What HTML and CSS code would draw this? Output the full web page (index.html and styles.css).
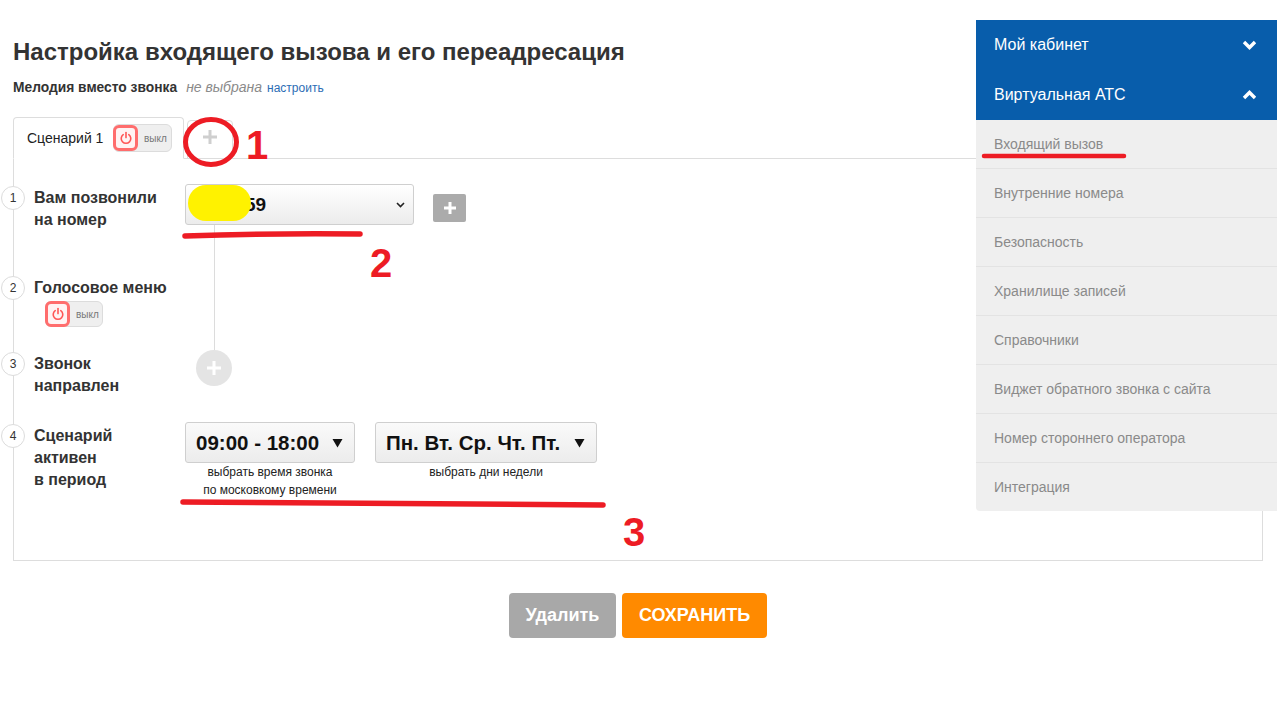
FILE: index.html
```html
<!DOCTYPE html>
<html lang="ru">
<head>
<meta charset="utf-8">
<title>Настройка входящего вызова</title>
<link rel="stylesheet" href="styles.css">
</head>
<body>
<div class="main">
  <h1 class="title">Настройка входящего вызова и его переадресация</h1>
  <div class="melody"><b>Мелодия вместо звонка</b><i>не выбрана</i><a class="link">настроить</a></div>

  <div class="tabs">
    <div class="tab tab-active">
      <span class="tab-name">Сценарий 1</span>
      <div class="toggle">
        <span class="power"><svg width="14" height="14" viewBox="0 0 14 14"><path d="M4.2 3.6 A4.8 4.8 0 1 0 9.8 3.6" fill="none" stroke="#ff5656" stroke-width="1.6" stroke-linecap="round"/><path d="M7 1.6 V6.6" stroke="#ff5656" stroke-width="1.6" stroke-linecap="round"/></svg></span>
        <span class="toggle-text">выкл</span>
      </div>
    </div>
    <div class="tab tab-add"><svg width="14" height="14" viewBox="0 0 14 14"><rect x="5.5" y="0" width="3" height="14" fill="#cfcfcf"/><rect x="0" y="5.5" width="14" height="3" fill="#cfcfcf"/></svg></div>
  </div>

  <div class="panel">
    <div class="row row-1">
      <div class="num">1</div>
      <div class="label">Вам позвонили<br>на номер</div>
      <div class="ctrl">
        <div class="ctrl-top">
          <div class="select select-num"><span class="sel-text">59</span><svg class="caret" width="9" height="6" viewBox="0 0 9 6"><path d="M1 1 L4.5 4.5 L8 1" fill="none" stroke="#222" stroke-width="1.6"/></svg></div>
          <div class="btn-plus"><svg width="12" height="12" viewBox="0 0 12 12"><rect x="4.5" y="0" width="3" height="12" fill="#fff"/><rect x="0" y="4.5" width="12" height="3" fill="#fff"/></svg></div>
        </div>
        <div class="connector"></div>
      </div>
    </div>

    <div class="row row-2">
      <div class="num">2</div>
      <div class="label-wrap">
        <div class="label">Голосовое меню</div>
        <div class="toggle toggle-row">
          <span class="power"><svg width="14" height="14" viewBox="0 0 14 14"><path d="M4.2 3.6 A4.8 4.8 0 1 0 9.8 3.6" fill="none" stroke="#ff5656" stroke-width="1.6" stroke-linecap="round"/><path d="M7 1.6 V6.6" stroke="#ff5656" stroke-width="1.6" stroke-linecap="round"/></svg></span>
          <span class="toggle-text">выкл</span>
        </div>
      </div>
      <div class="ctrl"><div class="connector"></div></div>
    </div>

    <div class="row row-3">
      <div class="num">3</div>
      <div class="label">Звонок<br>направлен</div>
      <div class="ctrl">
        <div class="circle-plus"><svg width="14" height="14" viewBox="0 0 14 14"><rect x="5.5" y="0" width="3" height="14" fill="#fff"/><rect x="0" y="5.5" width="14" height="3" fill="#fff"/></svg></div>
      </div>
    </div>

    <div class="row row-4">
      <div class="num">4</div>
      <div class="label">Сценарий<br>активен<br>в период</div>
      <div class="ctrl ctrl-period">
        <div class="pick">
          <div class="select select-big select-time"><span>09:00 - 18:00</span><svg width="11" height="10" viewBox="0 0 11 10"><path d="M0.5 1 H10.5 L5.5 9.5 Z" fill="#111"/></svg></div>
          <div class="caption">выбрать время звонка<br>по московкому времени</div>
        </div>
        <div class="pick">
          <div class="select select-big select-days"><span>Пн. Вт. Ср. Чт. Пт.</span><svg width="11" height="10" viewBox="0 0 11 10"><path d="M0.5 1 H10.5 L5.5 9.5 Z" fill="#111"/></svg></div>
          <div class="caption">выбрать дни недели</div>
        </div>
      </div>
    </div>
  </div>

  <div class="actions">
    <button class="btn btn-delete">Удалить</button>
    <button class="btn btn-save">СОХРАНИТЬ</button>
  </div>
</div>

<aside class="sidebar">
  <div class="side-head"><span>Мой кабинет</span><svg width="15" height="10" viewBox="0 0 15 10"><path d="M2 2 L7.5 7.5 L13 2" fill="none" stroke="#fff" stroke-width="3.4"/></svg></div>
  <div class="side-head"><span>Виртуальная АТС</span><svg width="15" height="10" viewBox="0 0 15 10"><path d="M2 8 L7.5 2.5 L13 8" fill="none" stroke="#fff" stroke-width="3.4"/></svg></div>
  <div class="side-item">Входящий вызов</div>
  <div class="side-item">Внутренние номера</div>
  <div class="side-item">Безопасность</div>
  <div class="side-item">Хранилище записей</div>
  <div class="side-item">Справочники</div>
  <div class="side-item">Виджет обратного звонка с сайта</div>
  <div class="side-item">Номер стороннего оператора</div>
  <div class="side-item">Интеграция</div>
</aside>

<svg class="marks" width="1277" height="717" viewBox="0 0 1277 717">
  <rect x="188" y="185" width="63" height="36" rx="18" ry="18" fill="#fff200"/>
  <ellipse cx="211" cy="142" rx="25.5" ry="22.5" fill="none" stroke="#ed1c24" stroke-width="5"/>
  <text x="246" y="159" class="mark-digit">1</text>
  <path d="M185 236 Q 270 233 360 234" fill="none" stroke="#ed1c24" stroke-width="5.5" stroke-linecap="round"/>
  <text x="370" y="277" class="mark-digit">2</text>
  <path d="M183 502 Q 400 503 603 505" fill="none" stroke="#ed1c24" stroke-width="5.5" stroke-linecap="round"/>
  <text x="623" y="546" class="mark-digit">3</text>
  <path d="M984 156 L1124 156" fill="none" stroke="#ed1c24" stroke-width="4.5" stroke-linecap="round"/>
</svg>
</body>
</html>
```
FILE: styles.css
```css
html, body {
  margin: 0;
  padding: 0;
  background: #fff;
}
body {
  font-family: "Liberation Sans", Arial, sans-serif;
  color: #333;
  position: relative;
  min-height: 717px;
}
.main {
  margin: 0 14px 0 13px;
  padding-top: 38px;
}
.title {
  margin: 0;
  font-size: 24px;
  line-height: 28px;
  font-weight: bold;
  color: #333;
}
.melody {
  margin-top: 13px;
  height: 16px;
  font-size: 14px;
  line-height: 16px;
  display: flex;
  align-items: baseline;
}
.melody b {
  color: #333;
  font-size: 13.8px;
}
.melody i {
  color: #8a8a8a;
  margin-left: 9px;
}
.melody .link {
  color: #2c6db5;
  font-size: 12px;
  margin-left: 5px;
}
.tabs {
  margin-top: 22px;
  display: flex;
  align-items: flex-end;
  border-bottom: 1px solid #ddd;
  height: 41px;
}
.tab {
  box-sizing: border-box;
  border: 1px solid #ddd;
  border-radius: 4px 4px 0 0;
  background: #fff;
}
.tab-active {
  height: 42px;
  width: 171px;
  margin-bottom: -1px;
  border-bottom-color: #fff;
  display: flex;
  align-items: center;
  padding: 0 11px 0 13px;
  justify-content: space-between;
}
.tab-name {
  font-size: 14px;
  color: #222;
}
.tab-add {
  width: 46px;
  height: 39px;
  margin-left: 3px;
  margin-bottom: -1px;
  border-bottom-color: #ddd;
  display: flex;
  align-items: center;
  justify-content: center;
  padding-bottom: 6px;
}
.toggle {
  box-sizing: border-box;
  width: 59px;
  height: 28px;
  background: #efefef;
  border: 1px solid #dcdcdc;
  border-radius: 6px;
  display: flex;
  align-items: center;
}
.power {
  box-sizing: border-box;
  width: 25px;
  height: 26px;
  border: 3px solid #ff6d6d;
  border-radius: 6px;
  background: #fff3f3;
  display: flex;
  align-items: center;
  justify-content: center;
  margin-left: -1px;
}
.toggle-text {
  font-size: 10px;
  color: #777;
  margin-left: 6px;
}
.panel {
  box-sizing: border-box;
  min-height: 402px;
  border: 1px solid #ddd;
  border-top: none;
  padding-top: 25px;
}
.row {
  display: flex;
}
.row-1 { height: 90px; }
.row-2 { height: 76px; }
.row-3 { height: 72px; }
.num {
  box-sizing: border-box;
  flex-shrink: 0;
  width: 24px;
  height: 24px;
  margin-left: -13px;
  margin-top: 2px;
  border: 1px solid #dcdcdc;
  border-radius: 50%;
  background: #fff;
  font-size: 12px;
  color: #333;
  display: flex;
  align-items: center;
  justify-content: center;
}
.label {
  width: 151px;
  margin-left: 9px;
  margin-top: 3px;
  font-size: 16px;
  line-height: 22px;
  font-weight: bold;
  color: #333;
  flex-shrink: 0;
}
.label-wrap {
  width: 160px;
  flex-shrink: 0;
}
.label-wrap .label {
  margin-top: 3px;
}
.toggle-row {
  width: 58px;
  height: 26px;
  margin-left: 20px;
  margin-top: 2px;
}
.toggle-row .power {
  height: 26px;
}
.ctrl {
  flex: 1;
  display: flex;
  flex-direction: column;
}
.ctrl-top {
  display: flex;
  align-items: flex-start;
}
.connector {
  flex: 1;
  margin-left: 29px;
  border-left: 1px solid #dcdcdc;
}
.select {
  box-sizing: border-box;
  border: 1px solid #cfcfcf;
  border-radius: 3px;
  background: linear-gradient(#ffffff, #ececec);
  display: flex;
  align-items: center;
  color: #111;
}
.select-num {
  width: 229px;
  height: 41px;
  padding: 0 8px 0 59px;
  justify-content: space-between;
  font-size: 19px;
  font-weight: bold;
}
.btn-plus {
  width: 33px;
  height: 28px;
  margin-left: 19px;
  margin-top: 10px;
  background: #ababab;
  border-radius: 2px;
  display: flex;
  align-items: center;
  justify-content: center;
}
.circle-plus {
  width: 36px;
  height: 36px;
  margin-left: 11px;
  border-radius: 50%;
  background: #e4e4e4;
  display: flex;
  align-items: center;
  justify-content: center;
}
.ctrl-period {
  flex-direction: row;
  gap: 20px;
}
.pick {
  display: flex;
  flex-direction: column;
  align-items: center;
}
.select-big {
  height: 41px;
  padding: 0 11px 0 10px;
  justify-content: space-between;
  font-size: 20.5px;
  font-weight: bold;
  background: linear-gradient(#fafafa, #ececec);
}
.select-time { width: 170px; }
.select-days { width: 222px; }
.caption {
  font-size: 12px;
  line-height: 18px;
  color: #222;
  text-align: center;
}
.actions {
  margin-top: 32px;
  display: flex;
  justify-content: center;
  gap: 6px;
}
.btn {
  height: 45px;
  border: none;
  border-radius: 4px;
  padding: 0;
  font-family: "Liberation Sans", Arial, sans-serif;
  font-size: 18px;
  font-weight: bold;
  color: #fff;
}
.btn-delete {
  background: #a8a8a8;
  width: 107px;
}
.btn-save {
  background: #ff8a00;
  width: 145px;
}
.sidebar {
  position: absolute;
  top: 20px;
  right: 0;
  width: 301px;
  border-radius: 0 0 0 4px;
  overflow: hidden;
  background: #efefef;
}
.side-head {
  box-sizing: border-box;
  height: 50px;
  background: #085dab;
  color: #fff;
  font-size: 16px;
  display: flex;
  align-items: center;
  justify-content: space-between;
  padding: 0 20px 0 18px;
}
.side-item {
  box-sizing: border-box;
  height: 49px;
  border-top: 1px solid #e3e3e3;
  padding-left: 18px;
  display: flex;
  align-items: center;
  font-size: 14px;
  color: #8a8a8a;
}
.side-item:nth-child(3) {
  border-top: none;
  height: 48px;
}
.marks {
  position: absolute;
  left: 0;
  top: 0;
  pointer-events: none;
  z-index: 10;
}
.mark-digit {
  font-family: "Liberation Sans", Arial, sans-serif;
  font-weight: bold;
  font-size: 40px;
  fill: #ed1c24;
}
```
